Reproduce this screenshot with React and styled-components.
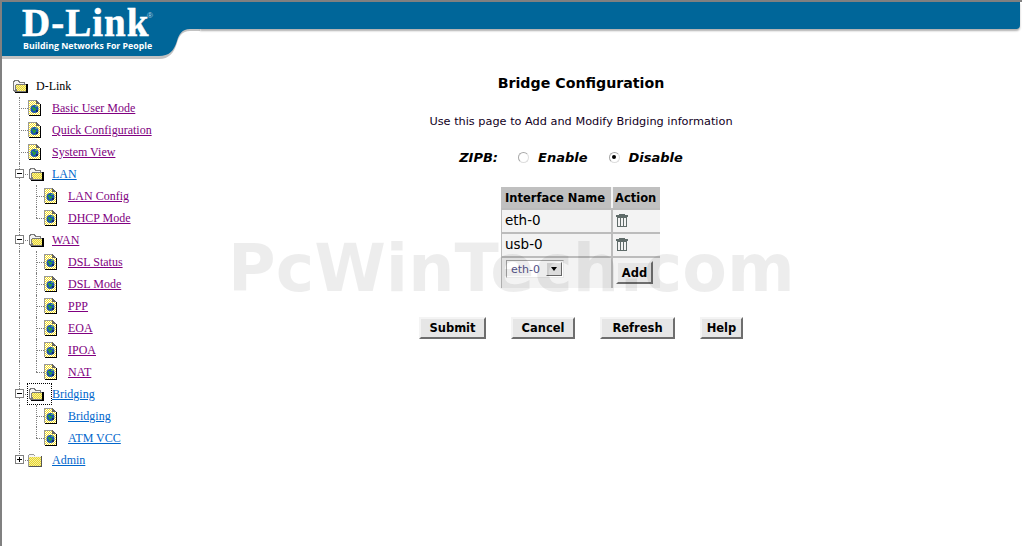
import React from 'react';
import styled, { createGlobalStyle } from 'styled-components';

const GlobalStyle = createGlobalStyle`
  html, body {
    margin: 0;
    padding: 0;
    height: 100%;
    overflow: hidden;
    background: #fff;
  }
  #root {
    height: 100%;
  }
`;

const Page = styled.div`
  position: relative;
  box-sizing: border-box;
  height: 100vh;
  border-top: 2px solid #808080;
  border-left: 2px solid #808080;
  overflow: hidden;
  font-family: "DejaVu Sans", Verdana, sans-serif;
`;

const Header = styled.header`
  display: flex;
  align-items: flex-start;
  height: 56px;
  padding-right: 2px;
`;

const Logo = styled.div`
  position: relative;
  flex: none;
  box-sizing: border-box;
  width: 198px;
  height: 56px;
  padding-left: 20px;
  color: #fff;

  svg {
    position: absolute;
    top: 0;
    left: 0;
  }
`;

const Brand = styled.div`
  position: relative;
  height: 38px;
  font: bold 39px/42px "Liberation Serif", "Times New Roman", serif;
  letter-spacing: 1px;
  -webkit-text-stroke: 0.5px #fff;

  sup {
    position: absolute;
    top: 10px;
    left: 125px;
    font: normal 8px/8px "Liberation Sans", Arial, sans-serif;
    letter-spacing: 0;
    -webkit-text-stroke: 0;
    color: #b8d4e4;
  }
`;

const Tagline = styled.div`
  position: relative;
  font: 700 8.75px/13px "Open Sans", "Liberation Sans", Arial, sans-serif;
  margin-left: 1px;
  white-space: nowrap;
`;

const Band = styled.div`
  flex: 1;
  height: 27px;
  background: #006699;
  border-bottom-right-radius: 4px;
  box-shadow: 0 2px 2px #b0b0b0;
`;

const Body = styled.div`
  display: flex;
  align-items: flex-start;
`;

const Sidebar = styled.nav`
  flex: none;
  box-sizing: border-box;
  width: 168px;
  padding: 17px 0 0 10px;
`;

const Row = styled.div`
  display: flex;
  align-items: center;
  height: 22px;
`;

const Cell = styled.span`
  position: relative;
  flex: none;
  display: flex;
  align-items: center;
  justify-content: center;
  width: 16px;
  height: 22px;

  ${(p) => p.$focused && `
    &::after {
      content: "";
      position: absolute;
      top: 0;
      left: -1px;
      width: 23px;
      height: 20px;
      border: 1px dotted #000;
    }
  `}
`;

const Vertical = styled.i`
  position: absolute;
  top: 0;
  left: ${(p) => p.$x}px;
  height: ${(p) => (p.$half ? '11px' : '22px')};
  border-left: 1px dotted #808080;
`;

const Horizontal = styled.i`
  position: absolute;
  top: 11px;
  left: ${(p) => p.$x}px;
  right: 0;
  border-top: 1px dotted #808080;
`;

const Toggle = styled.span`
  position: absolute;
  top: 6px;
  left: 3px;
  box-sizing: border-box;
  width: 9px;
  height: 9px;
  border: 1px solid #808080;
  background: #fff;
  z-index: 1;

  &::before {
    content: "";
    position: absolute;
    top: 3px;
    left: 1px;
    width: 5px;
    height: 1px;
    background: #000;
  }

  ${(p) => p.$closed && `
    &::after {
      content: "";
      position: absolute;
      top: 1px;
      left: 3px;
      width: 1px;
      height: 5px;
      background: #000;
    }
  `}
`;

const TreeLink = styled.a`
  margin-left: 8px;
  font: 12px/14px "Liberation Serif", "Times New Roman", serif;
  color: ${(p) => p.$color};
  text-decoration: ${(p) => (p.$color === '#000' ? 'none' : 'underline')};
  white-space: nowrap;
`;

const Main = styled.main`
  flex: 1;
  display: flex;
  flex-direction: column;
  align-items: center;
  margin-right: 30px;
  padding-top: 16px;
`;

const Title = styled.h1`
  margin: 0;
  font-size: 14.2px;
  line-height: 18px;
  font-weight: bold;
  color: #000;
`;

const Intro = styled.p`
  margin: 23px 0 0;
  font-size: 11.3px;
  line-height: 14px;
  color: #110022;
`;

const ZipbRow = styled.div`
  display: flex;
  align-items: center;
  height: 18px;
  margin-top: 19px;
  padding-right: 20px;
  font-size: 13px;
  font-weight: bold;
  font-style: italic;
  color: #000;
`;

const ZipbLabel = styled.span`
  margin-right: 20px;
`;

const RadioLabel = styled.label`
  display: flex;
  align-items: center;
  margin-right: ${(p) => p.$gap || 0}px;
`;

const Radio = styled.input`
  appearance: none;
  position: relative;
  box-sizing: border-box;
  width: 11px;
  height: 11px;
  margin: 0 9px 0 0;
  border: 1px solid #a8a8a8;
  border-right-color: #dddddd;
  border-bottom-color: #dddddd;
  border-radius: 50%;
  background: #fff;

  &:checked::after {
    content: "";
    position: absolute;
    top: 2.5px;
    left: 2.5px;
    width: 4px;
    height: 4px;
    border-radius: 50%;
    background: #000;
  }
`;

const Table = styled.table`
  margin: 21px 0 0 -1px;
  width: 159px;
  border-collapse: separate;
  border-spacing: 0;
  table-layout: fixed;
  font-size: 13.5px;
  color: #000;
`;

const HeadCell = styled.th`
  box-sizing: border-box;
  height: 21px;
  padding: 0 0 0 ${(p) => p.$pad}px;
  background: #c0c0c0;
  border-left: ${(p) => (p.$second ? '2px solid #f4f4f4' : 0)};
  font-size: 11.5px;
  line-height: 14px;
  font-weight: bold;
  text-align: left;
  white-space: nowrap;
`;

const DataCell = styled.td`
  box-sizing: border-box;
  height: ${(p) => p.$height || 24}px;
  padding: ${(p) => p.$top || 0}px 0 ${(p) => (p.$top ? 0 : 2)}px ${(p) => p.$pad ?? 3}px;
  background: #f3f3f3;
  border-top: 2px solid #bcbcbc;
  border-left: ${(p) => (p.$second ? 2 : 1)}px solid #bcbcbc;
  vertical-align: ${(p) => (p.$top ? 'top' : 'middle')};
`;

const SelectBox = styled.span`
  display: flex;
  align-items: center;
  justify-content: space-between;
  box-sizing: border-box;
  width: 58px;
  height: 18px;
  margin-left: 1px;
  padding: 0 1px 0 4px;
  border: 1px solid #a5a5a5;
  border-right-color: #e8e8e8;
  border-bottom-color: #e8e8e8;
  background: #fff;
  color: #55558a;
  font-size: 11px;
`;

const SelectArrow = styled.span`
  display: flex;
  align-items: center;
  justify-content: center;
  width: 16px;
  height: 14px;
  box-sizing: border-box;
  border: 1px solid;
  border-color: #fff #666 #666 #fff;
  background: #dcdcdc;

  &::after {
    content: "";
    border-style: solid;
    border-width: 4px 3px 0;
    border-color: #000 transparent transparent;
  }
`;

const Button = styled.button`
  display: block;
  box-sizing: border-box;
  height: ${(p) => (p.$small ? 23 : 22)}px;
  width: ${(p) => p.$width}px;
  padding: 0;
  border: 2px solid;
  border-color: #f4f4f4 #6e6e6e #6e6e6e #f4f4f4;
  background: #e6e6e6;
  color: #000;
  font-family: "DejaVu Sans", Verdana, sans-serif;
  font-size: 11.5px;
  font-weight: bold;
`;

const ButtonRow = styled.div`
  display: flex;
  gap: 25px;
  margin-top: 29px;
`;

const Watermark = styled.div`
  position: absolute;
  top: 229px;
  left: 226px;
  font-size: 65px;
  line-height: 76px;
  font-weight: bold;
  color: rgba(0, 0, 0, 0.07);
  white-space: nowrap;
  pointer-events: none;
`;

const TrashSvg = styled.svg`
  display: block;
`;

const LogoShape = () => (
  <svg width="198" height="60" viewBox="0 0 198 60">
    <path d="M0 2H198V29H188C180 29 177 34 175 41C172 51 167 57 157 57H0Z" fill="#9a9a9a" opacity="0.6" />
    <path d="M0 0H198V27H188C180 27 177 32 175 39C172 49 167 54 157 54H0Z" fill="#006699" />
  </svg>
);

const Dither = ({ id, base, color }) => (
  <pattern id={id} width="2" height="2" patternUnits="userSpaceOnUse">
    <rect width="2" height="2" fill={base} />
    <rect width="1" height="1" fill={color} />
    <rect x="1" y="1" width="1" height="1" fill={color} />
  </pattern>
);

const PageIcon = () => (
  <svg width="16" height="16" viewBox="0 0 16 16" shapeRendering="crispEdges">
    <defs>
      <Dither id="pageDither" base="#fff" color="#f6e020" />
    </defs>
    <path d="M0 1H9L12 4V16H0Z" fill="url(#pageDither)" />
    <path d="M0 0H8V1H1V15H0Z" fill="#999" />
    <path d="M8 0H9V1H10V2H11V3H12V4H8Z" fill="#666" />
    <path d="M12 4H13V16H1V15H12Z" fill="#000" />
    <circle cx="6.5" cy="9" r="4" fill="#1a55b0" shapeRendering="auto" />
    <path d="M4 7H6V8H8V10H7V11H5V9H4Z" fill="#2a9a40" />
    <path d="M7 6H9V7H7Z" fill="#4ab860" />
    <path d="M8 10H10V12H8Z" fill="#0c2c66" />
  </svg>
);

const FolderOpenIcon = () => (
  <svg width="16" height="14" viewBox="0 0 16 14" shapeRendering="crispEdges">
    <defs>
      <Dither id="folderDither" base="#f8f09a" color="#e6d430" />
    </defs>
    <path d="M1 2H2V1H7V2H8V3H13V5H15V13H2V12H1Z" fill="#7a7a7a" />
    <path d="M2 3H3V2H6V3H7V4H12V5H4V6H3V11H2Z" fill="#f4f4f4" />
    <path d="M4 6H14V12H5V10H4Z" fill="url(#folderDither)" />
    <path d="M14 5H16V14H3V13H14Z" fill="#000" />
  </svg>
);

const FolderClosedIcon = () => (
  <svg width="16" height="14" viewBox="0 0 16 14" shapeRendering="crispEdges">
    <defs>
      <Dither id="closedDither" base="#f8f09a" color="#e6d430" />
    </defs>
    <path d="M0 2H1V1H6V2H7V3H14V14H0Z" fill="#9a9a9a" />
    <path d="M1 2H6V3H1ZM1 3H13V4H1Z" fill="#f6f6f6" />
    <path d="M1 4H13V13H1Z" fill="url(#closedDither)" />
    <path d="M13 3H14V14H1V13H13Z" fill="#555" />
  </svg>
);

const TrashIcon = () => (
  <TrashSvg width="14" height="13" viewBox="0 0 14 13" shapeRendering="crispEdges" fill="#5f6b69">
    <path d="M4 0H10V1H4Z" />
    <path d="M1 1H13V3H1Z" />
    <path d="M2 3H12V13H2ZM3 4V12H5V4ZM6 4V12H8V4ZM9 4V12H11V4Z" fillRule="evenodd" />
  </TrashSvg>
);

const Guide = ({ type, x }) => (
  <Cell>
    {(type === 'pipe' || type === 'tee' || type === 'minus') && <Vertical $x={x} />}
    {(type === 'ell' || type === 'plus') && <Vertical $x={x} $half />}
    {type !== 'pipe' && <Horizontal $x={x} />}
    {type === 'minus' && <Toggle />}
    {type === 'plus' && <Toggle $closed />}
  </Cell>
);

const PURPLE = '#800080';
const BLUE = '#0066cc';

const tree = [
  { label: 'D-Link', guides: [], icon: 'open', color: '#000' },
  { label: 'Basic User Mode', guides: ['tee'], icon: 'page', color: PURPLE },
  { label: 'Quick Configuration', guides: ['tee'], icon: 'page', color: PURPLE },
  { label: 'System View', guides: ['tee'], icon: 'page', color: PURPLE },
  { label: 'LAN', guides: ['minus'], icon: 'open', color: BLUE },
  { label: 'LAN Config', guides: ['pipe', 'tee'], icon: 'page', color: PURPLE },
  { label: 'DHCP Mode', guides: ['pipe', 'ell'], icon: 'page', color: PURPLE },
  { label: 'WAN', guides: ['minus'], icon: 'open', color: PURPLE },
  { label: 'DSL Status', guides: ['pipe', 'tee'], icon: 'page', color: PURPLE },
  { label: 'DSL Mode', guides: ['pipe', 'tee'], icon: 'page', color: PURPLE },
  { label: 'PPP', guides: ['pipe', 'tee'], icon: 'page', color: PURPLE },
  { label: 'EOA', guides: ['pipe', 'tee'], icon: 'page', color: PURPLE },
  { label: 'IPOA', guides: ['pipe', 'tee'], icon: 'page', color: PURPLE },
  { label: 'NAT', guides: ['pipe', 'ell'], icon: 'page', color: PURPLE },
  { label: 'Bridging', guides: ['minus'], icon: 'open', color: BLUE, focused: true },
  { label: 'Bridging', guides: ['pipe', 'tee'], icon: 'page', color: BLUE },
  { label: 'ATM VCC', guides: ['pipe', 'ell'], icon: 'page', color: BLUE },
  { label: 'Admin', guides: ['plus'], icon: 'closed', color: BLUE },
];

const icons = {
  open: <FolderOpenIcon />,
  closed: <FolderClosedIcon />,
  page: <PageIcon />,
};

export default function App() {
  return (
    <Page>
      <GlobalStyle />
      <Header>
        <Logo>
          <LogoShape />
          <Brand>
            D-Link<sup>®</sup>
          </Brand>
          <Tagline>Building Networks For People</Tagline>
        </Logo>
        <Band />
      </Header>
      <Body>
        <Sidebar>
          {tree.map((item, i) => (
            <Row key={i}>
              {item.guides.map((g, j) => (
                <Guide key={j} type={g} x={j === 0 ? 7 : 8} />
              ))}
              <Cell $focused={item.focused}>{icons[item.icon]}</Cell>
              <TreeLink $color={item.color}>{item.label}</TreeLink>
            </Row>
          ))}
        </Sidebar>
        <Main>
          <Title>Bridge Configuration</Title>
          <Intro>Use this page to Add and Modify Bridging information</Intro>
          <ZipbRow>
            <ZipbLabel>ZIPB:</ZipbLabel>
            <RadioLabel $gap={21}>
              <Radio type="radio" name="zipb" />
              Enable
            </RadioLabel>
            <RadioLabel>
              <Radio type="radio" name="zipb" defaultChecked />
              Disable
            </RadioLabel>
          </ZipbRow>
          <Table>
            <colgroup>
              <col style={{ width: 110 }} />
              <col style={{ width: 49 }} />
            </colgroup>
            <thead>
              <tr>
                <HeadCell $pad={4}>Interface Name</HeadCell>
                <HeadCell $pad={2} $second>Action</HeadCell>
              </tr>
            </thead>
            <tbody>
              <tr>
                <DataCell>eth-0</DataCell>
                <DataCell $second $pad={2}><TrashIcon /></DataCell>
              </tr>
              <tr>
                <DataCell>usb-0</DataCell>
                <DataCell $second $pad={2}><TrashIcon /></DataCell>
              </tr>
              <tr>
                <DataCell $height={32} $top={2}>
                  <SelectBox>eth-0<SelectArrow /></SelectBox>
                </DataCell>
                <DataCell $height={32} $top={3} $second>
                  <Button $small $width={37}>Add</Button>
                </DataCell>
              </tr>
            </tbody>
          </Table>
          <ButtonRow>
            <Button $width={67}>Submit</Button>
            <Button $width={64}>Cancel</Button>
            <Button $width={75}>Refresh</Button>
            <Button $width={43}>Help</Button>
          </ButtonRow>
        </Main>
      </Body>
      <Watermark>PcWinTech.com</Watermark>
    </Page>
  );
}
